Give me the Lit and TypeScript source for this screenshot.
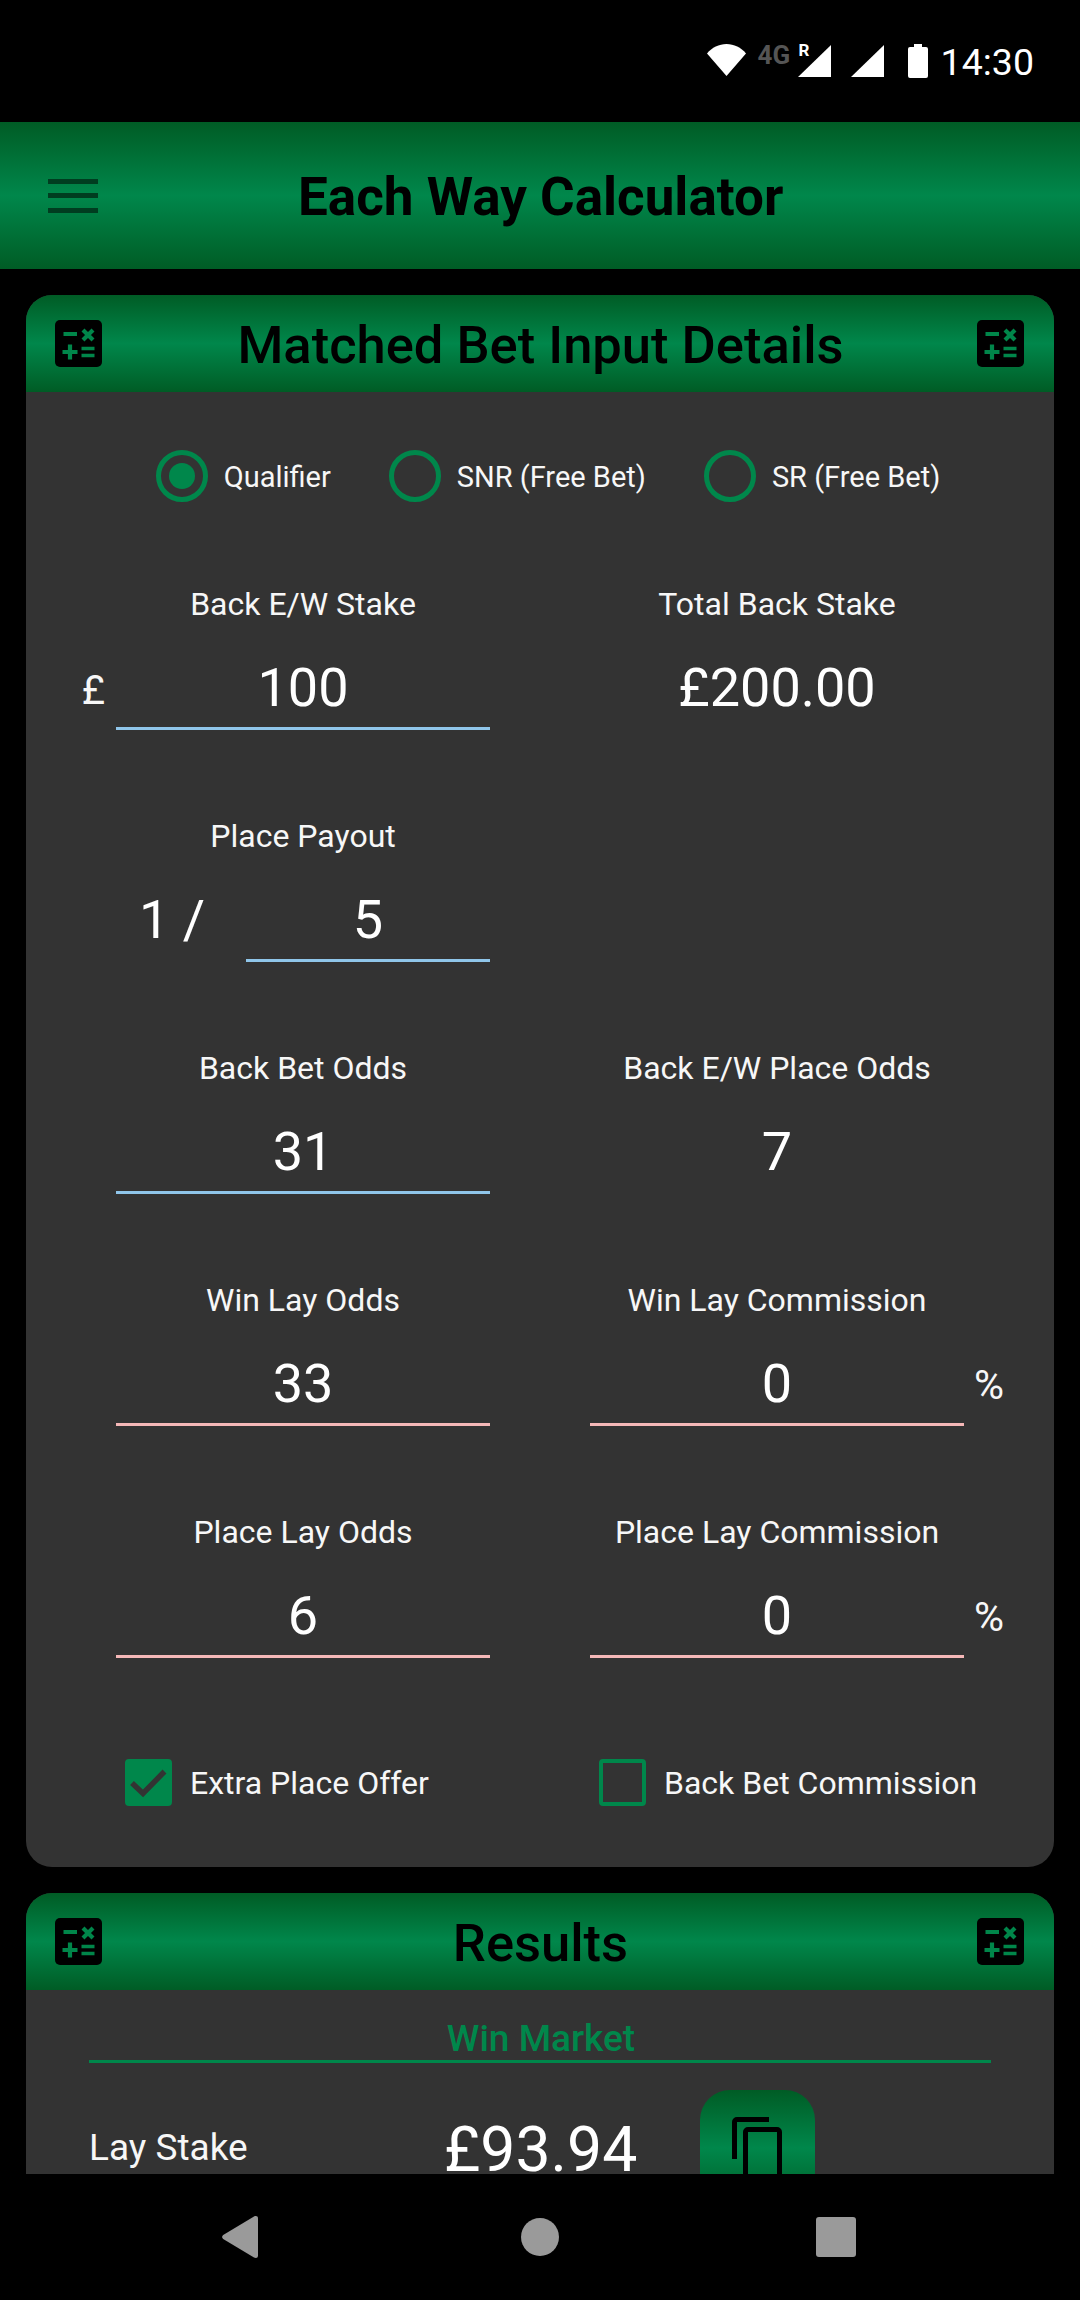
import {LitElement, html, css} from 'lit';
import {customElement} from 'lit/decorators.js';

const calcIcon = html`<svg class="calc" viewBox="0 0 47 47" width="47" height="47">
  <rect width="47" height="47" rx="5" fill="#000"/>
  <path d="M8.500 14h13.500M28 10l10 10M38 10L28 20M15 24.500v15M7.500 32h15" fill="none" stroke="#00864a" stroke-width="4.200"/>
  <path d="M26.500 28.500h13M26.500 35.500h13" fill="none" stroke="#00864a" stroke-width="3.600"/>
</svg>`;

@customElement('app-root')
class AppRoot extends LitElement {
  static styles = css`
  :host {
    display: flex;
    flex-direction: column;
    width: 1080px;
    height: 2300px;
    overflow: hidden;
    background: #000;
    color: #f7f7f7;
    font-family: Roboto, "Liberation Sans", sans-serif;
  }
  .status {
    height: 122px;
    flex: none;
    display: flex;
    align-items: center;
    justify-content: flex-end;
    padding-right: 46px;
    box-sizing: border-box;
    color: #fff;
  }
  .status svg { display: block; flex: none; }
  .wifi { margin-bottom: 2px; }
  .net {
    font-size: 26px;
    font-weight: 700;
    color: #555;
    margin-left: 12px;
    margin-bottom: 12px;
    line-height: 28px;
    width: 35px;
  }
  .signal { position: relative; margin-left: 20px; }
  .signal.first { margin-left: 5px; }
  .roam {
    position: absolute;
    left: 1px;
    top: -5px;
    font-size: 17px;
    line-height: 20px;
    font-weight: 700;
    color: #fff;
  }
  .battery { margin-left: 24px; }
  .status .time { font-size: 37.500px; margin: 2px 0 0 13px; line-height: 44px; }
  .appbar {
    height: 147px;
    flex: none;
    display: flex;
    align-items: center;
    background: linear-gradient(#005c25, #00874b 50%, #005c25);
  }
  .burger { margin-left: 48px; display: block; }
  .appbar h1 {
    margin: 2px 0 0 200px;
    font-size: 53px;
    font-weight: 700;
    color: #000;
  }
  .content {
    flex: 1;
    min-height: 0;
    overflow: hidden;
    padding: 26px 26px 0;
    display: flex;
    flex-direction: column;
    gap: 26px;
  }
  .card {
    background: #333;
    border-radius: 26px;
    flex: none;
  }
  .card-head {
    height: 97px;
    display: flex;
    align-items: center;
    justify-content: space-between;
    padding: 0 30px 0 29px;
    border-radius: 26px 26px 0 0;
    background: linear-gradient(#005c25, #00874b 50%, #005c25);
  }
  .card-head h2 {
    margin: 2px 0 0 2px;
    font-size: 52.500px;
    font-weight: 500;
    color: #000;
  }
  .calc { display: block; }
  .input-body {
    height: 1475px;
    box-sizing: border-box;
    padding-top: 58px;
  }
  .radios {
    display: flex;
    justify-content: center;
    align-items: center;
    height: 52px;
    gap: 58px;
    padding-left: 16px;
    margin-bottom: 84px;
    font-size: 29px;
  }
  .radio { display: flex; align-items: center; gap: 16px; }
  .radio span.text { padding-top: 1px; }
  .dot {
    width: 52px;
    height: 52px;
    box-sizing: border-box;
    border: 5px solid #00874b;
    border-radius: 50%;
    display: flex;
    align-items: center;
    justify-content: center;
  }
  .dot.on::after {
    content: '';
    width: 26px;
    height: 26px;
    border-radius: 50%;
    background: #00874b;
  }
  .fields {
    display: grid;
    grid-template-columns: 90px 374px 100px 374px 1fr;
    grid-auto-rows: 232px;
  }
  .field { text-align: center; font-size: 32px; line-height: 36px; }
  .field.c1 { grid-column: 2; }
  .field.c2 { grid-column: 4; }
  .value {
    margin-top: 31px;
    height: 74px;
    line-height: 70px;
    font-size: 54px;
    color: #fff;
  }
  .blue { border-bottom: 3px solid #90c6ea; }
  .pink { border-bottom: 3px solid #f5b8b8; }
  .pound {
    grid-column: 1;
    font-size: 40px;
    line-height: 47px;
    text-align: right;
    padding: 81px 11px 0 0;
  }
  .pct {
    grid-column: 5;
    font-size: 41px;
    line-height: 47px;
    padding: 80px 0 0 10px;
  }
  .split { display: flex; align-items: flex-start; margin-top: 31px; }
  .split .frac {
    width: 130px;
    margin-left: -9px;
    font-size: 54px;
    line-height: 70px;
    flex: none;
    color: #fff;
  }
  .split .value { flex: 1; margin: 0 0 0 9px; }
  .checks {
    display: grid;
    grid-template-columns: 564px 1fr;
    margin-top: 13px;
    font-size: 32px;
  }
  .check { display: flex; align-items: center; gap: 18px; }
  .check.a { padding-left: 99px; }
  .check.b { padding-left: 9px; }
  .box {
    width: 47px;
    height: 47px;
    box-sizing: border-box;
    border: 4px solid #00874b;
    border-radius: 4px;
    flex: none;
  }
  .box.on { background: #00874b; }
  .box svg { display: block; }
  .results-body { padding: 28px 63px 0; height: 400px; }
  .section {
    color: #00874b;
    font-size: 37px;
    font-weight: 500;
    text-align: center;
    line-height: 42px;
    border-bottom: 3px solid #00874b;
    padding-left: 2px;
  }
  .result {
    display: grid;
    grid-template-columns: 355px 1fr;
    margin-top: 27px;
  }
  .result .name { font-size: 37px; padding-top: 36px; }
  .result .row { display: flex; align-items: flex-start; }
  .result .amount { font-size: 62.500px; line-height: 70px; padding-top: 25px; color: #fff; width: 256px; }
  .copy {
    width: 115px;
    height: 116px;
    flex: none;
    border-radius: 30px;
    background: linear-gradient(#005c25, #00874b 50%, #005c25);
    display: flex;
    justify-content: center;
    align-items: flex-start;
    padding: 27px 2px 0 0;
    box-sizing: border-box;
  }
  .copy svg { display: block; flex: none; }
  .nav {
    height: 126px;
    flex: none;
    background: #000;
    display: flex;
    align-items: center;
    padding-left: 222px;
  }
  .nav svg { display: block; flex: none; }
  .nav .home { margin-left: 263px; }
  .nav .recent { margin-left: 257px; }
  `;

  private _field(label: string, value: string, tone: string, col: string) {
    return html`<div class="field ${col}">
      <div>${label}</div>
      <div class="value ${tone}">${value}</div>
    </div>`;
  }

  render() {
    return html`
    <div class="status">
      <svg class="wifi" width="39" height="32" viewBox="0 0 39 32"><path d="M0 9.500C5 3.500 12 0 19.500 0S34 3.500 39 9.500L19.500 32z" fill="#fff"/></svg>
      <span class="net">4G</span>
      <div class="signal first">
        <svg width="33" height="32" viewBox="0 0 33 32"><path d="M33 0v32H0z" fill="#fff"/></svg>
        <span class="roam">R</span>
      </div>
      <div class="signal">
        <svg width="33" height="32" viewBox="0 0 33 32"><path d="M33 0v32H0z" fill="#fff"/></svg>
      </div>
      <svg class="battery" width="20" height="34" viewBox="0 0 20 34"><path d="M6 0h8v3h4a2 2 0 0 1 2 2v27a2 2 0 0 1-2 2H2a2 2 0 0 1-2-2V5a2 2 0 0 1 2-2h4z" fill="#fff"/></svg>
      <span class="time">14:30</span>
    </div>
    <div class="appbar">
      <svg class="burger" width="50" height="34" viewBox="0 0 50 34"><path d="M0 0h50v5H0zM0 14h50v5H0zM0 29h50v5H0z" fill="#003d20"/></svg>
      <h1>Each Way Calculator</h1>
    </div>
    <div class="content">
      <div class="card">
        <div class="card-head">${calcIcon}<h2>Matched Bet Input Details</h2>${calcIcon}</div>
        <div class="input-body">
          <div class="radios">
            <div class="radio"><span class="dot on"></span><span class="text">Qualifier</span></div>
            <div class="radio"><span class="dot"></span><span class="text">SNR (Free Bet)</span></div>
            <div class="radio"><span class="dot"></span><span class="text">SR (Free Bet)</span></div>
          </div>
          <div class="fields">
            <div class="pound">£</div>
            ${this._field('Back E/W Stake', '100', 'blue', 'c1')}
            ${this._field('Total Back Stake', '£200.00', '', 'c2')}

            <div class="field c1">
              <div>Place Payout</div>
              <div class="split"><span class="frac">1 /</span><div class="value blue">5</div></div>
            </div>
            <div class="field c2"></div>

            ${this._field('Back Bet Odds', '31', 'blue', 'c1')}
            ${this._field('Back E/W Place Odds', '7', '', 'c2')}

            ${this._field('Win Lay Odds', '33', 'pink', 'c1')}
            ${this._field('Win Lay Commission', '0', 'pink', 'c2')}
            <div class="pct">%</div>

            ${this._field('Place Lay Odds', '6', 'pink', 'c1')}
            ${this._field('Place Lay Commission', '0', 'pink', 'c2')}
            <div class="pct">%</div>
          </div>
          <div class="checks">
            <div class="check a"><span class="box on"><svg width="39" height="39" viewBox="0 0 39 39"><path d="M3 20l11 10.500L35.500 8.500" fill="none" stroke="#333" stroke-width="5.500"/></svg></span>Extra Place Offer</div>
            <div class="check b"><span class="box"></span>Back Bet Commission</div>
          </div>
        </div>
      </div>
      <div class="card">
        <div class="card-head">${calcIcon}<h2>Results</h2>${calcIcon}</div>
        <div class="results-body">
          <div class="section">Win Market</div>
          <div class="result">
            <div class="name">Lay Stake</div>
            <div class="row">
              <div class="amount">£93.94</div>
              <div class="copy"><svg width="50" height="70" viewBox="0 0 50 70"><path d="M37 0H5a5 5 0 0 0-5 5v37h5V5h32zM45 10H16a5 5 0 0 0-5 5v45a5 5 0 0 0 5 5h29a5 5 0 0 0 5-5V15a5 5 0 0 0-5-5zm0 50H16V15h29z" fill="#000"/></svg></div>
            </div>
          </div>
        </div>
      </div>
    </div>
    <div class="nav">
      <svg width="36" height="42" viewBox="0 0 36 42"><path d="M2 18.500L32 .500c2-1 4-.5 4 2v37c0 2.500-2 3-4 2L2 23.500c-2.500-1.500-2.500-3.500 0-5z" fill="#9a9a9a"/></svg>
      <svg class="home" width="38" height="38" viewBox="0 0 38 38"><circle cx="19" cy="19" r="19" fill="#9a9a9a"/></svg>
      <svg class="recent" width="40" height="40" viewBox="0 0 40 40"><rect width="40" height="40" rx="3" fill="#9a9a9a"/></svg>
    </div>
    `;
  }
}
